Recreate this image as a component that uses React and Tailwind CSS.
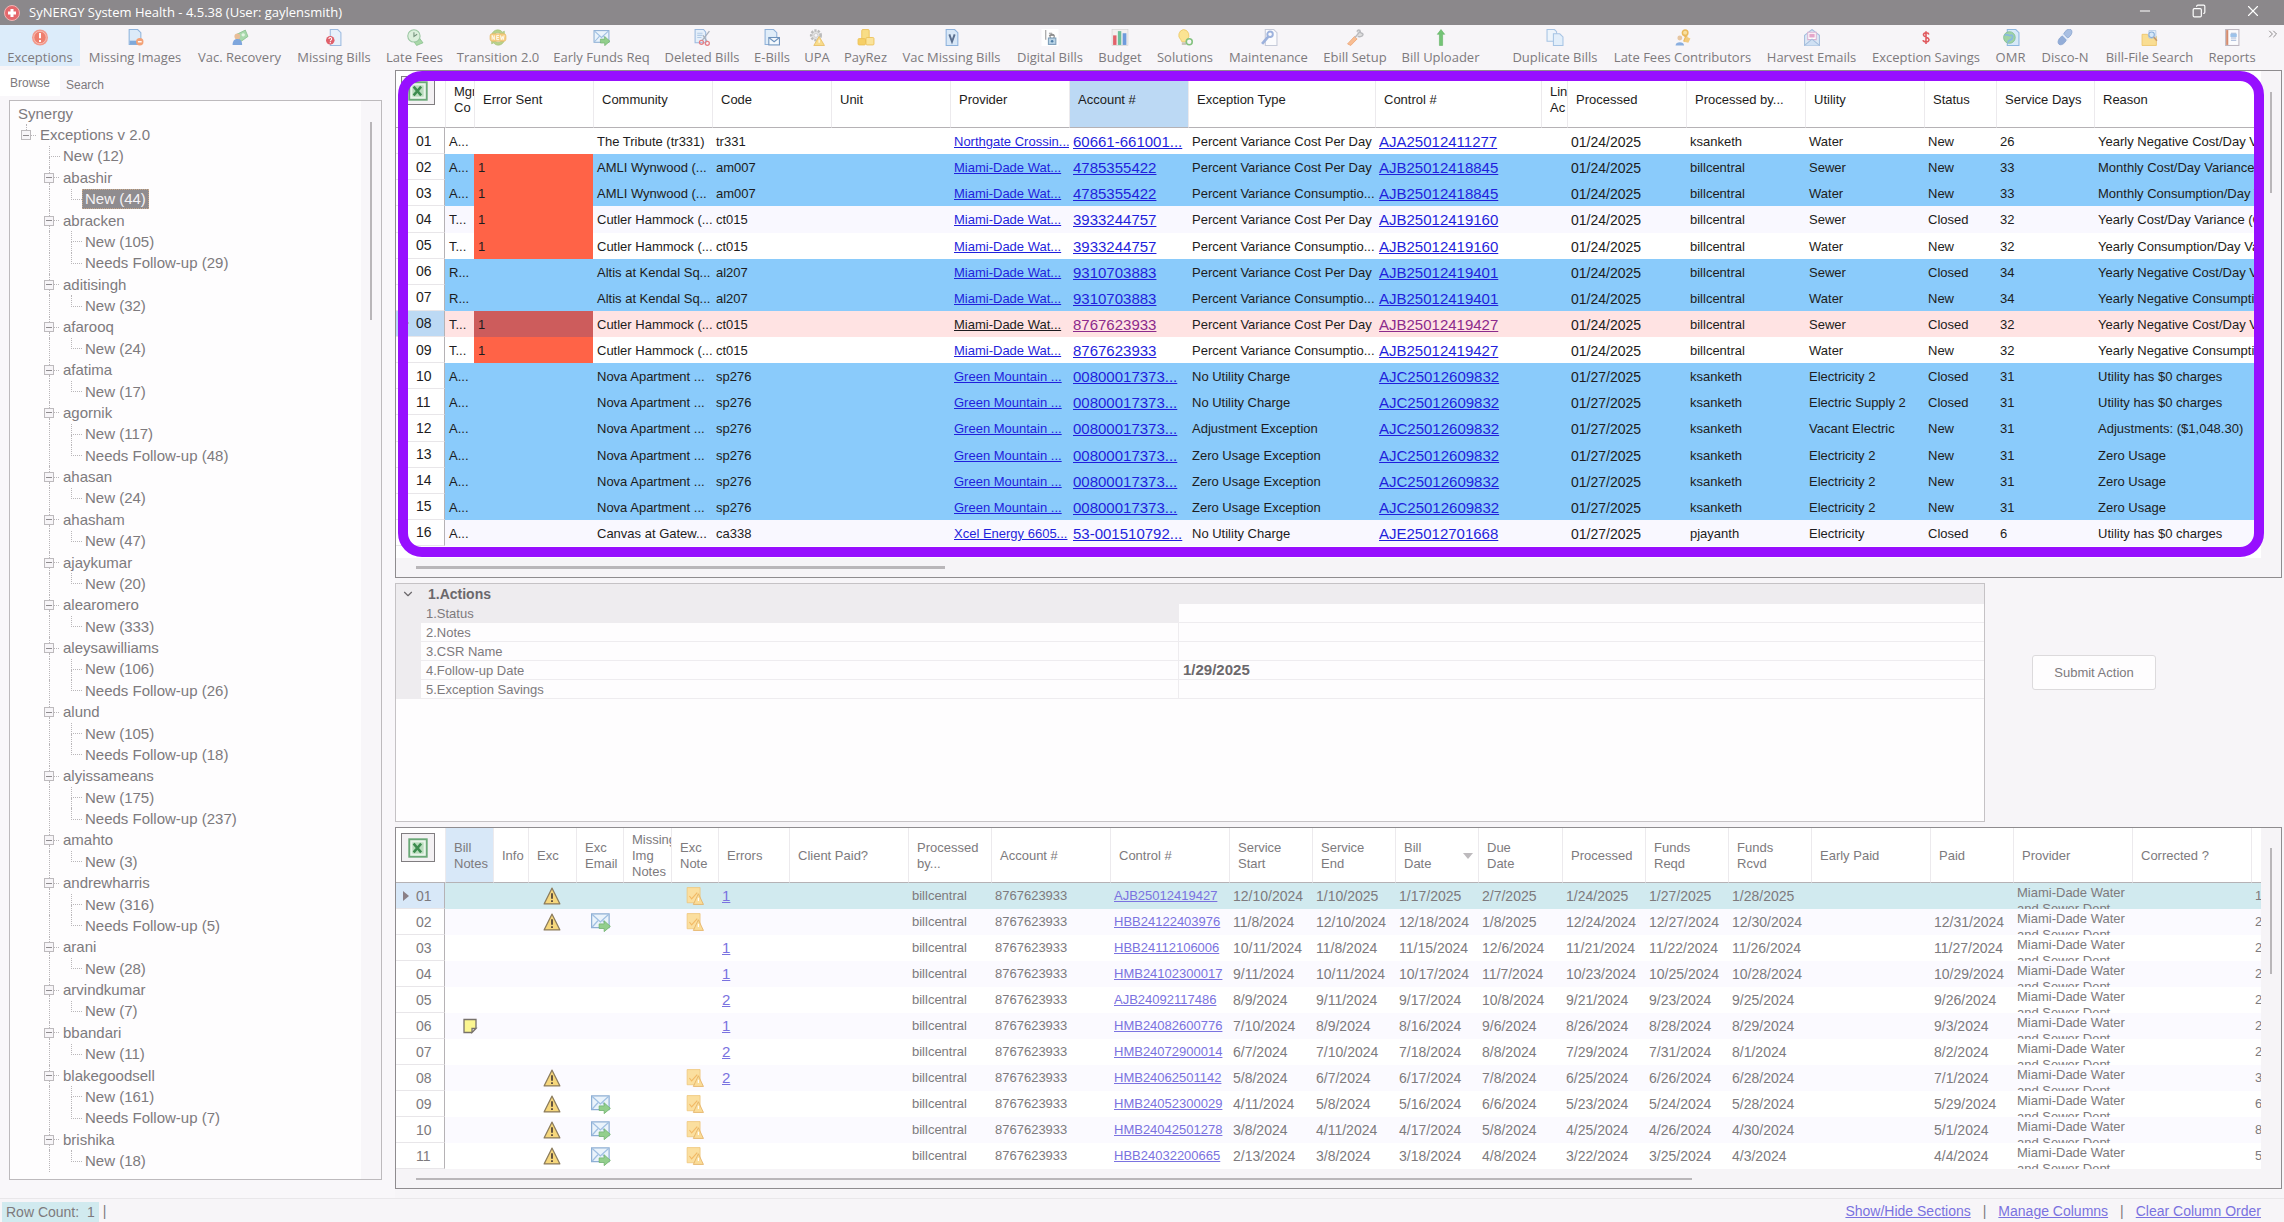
import React from 'react';
import clsx from 'clsx';
import { ChevronDown, ChevronsRight, Minus, X, Copy } from 'lucide-react';

const icons = {
  exceptions: (
    <>
      <circle cx="8" cy="8" r="7.5" fill="#f19a8c" />
      <circle cx="8" cy="8" r="5.8" fill="#ee7f6e" stroke="#fbd5cd" strokeWidth="0.6" />
      <path d="M8 3.8v5M8 10.4v1.8" stroke="#fff" strokeWidth="1.8" />
    </>
  ),
  missingImages: (
    <>
      <path d="M2.5.5h8l3 3v11h-11z" fill="#dcebf8" stroke="#8fb4dc" />
      <path d="M3 11h10v3.5H3z" fill="#7fa9da" />
      <circle cx="12.5" cy="12" r="3.5" fill="#f3a277" />
      <path d="M10.7 12h3.6" stroke="#fff" strokeWidth="1.3" />
    </>
  ),
  vacRecovery: (
    <>
      <path d="M5 5l8-4 2.500 6-7 5z" fill="#a8d8ac" stroke="#84bd8a" strokeWidth="0.7" />
      <circle cx="11" cy="5.5" r="1.6" fill="#e3f4e3" />
      <circle cx="5.5" cy="7" r="2.7" fill="#e8be98" />
      <path d="M1 15c0-4 2-5.500 4.500-5.500S10 11 10 15z" fill="#7ea6dd" />
    </>
  ),
  missingBills: (
    <>
      <path d="M4.5.5h7l3 3v12h-10z" fill="#e8f1fb" stroke="#9dbbe0" />
      <circle cx="4.5" cy="10.5" r="4" fill="#e0606b" />
      <path d="M3.2 9.5c0-2 2.7-1.8 2.6 0 0 1-1.3 1-1.300 2M4.5 12.300v1" stroke="#fff" fill="none" />
    </>
  ),
  lateFees: (
    <>
      <path d="M5 9l6-2 4.500 6-6 2.500z" fill="#a9d8a8" stroke="#83bd88" strokeWidth="0.7" />
      <circle cx="7" cy="6.5" r="5.8" fill="#dcefdc" stroke="#9ac6a2" />
      <path d="M7 3v4l3-2" stroke="#75917d" fill="none" />
    </>
  ),
  transition: (
    <>
      <path d="M2 5C4 0 10-.5 12 3l2-1v5H9l2-2C9 3 6 3 5 5zM14 11c-2 5-8 5.500-10 2l-2 1V9h5l-2 2c2 2 5 2 6 0z" fill="#b9d18a" stroke="#9fbb70" strokeWidth="0.5" />
      <rect x="0.5" y="4.5" width="15" height="7" rx="2" fill="#f6cf83" stroke="#e4b565" strokeWidth="0.6" />
      <path d="M2.500 10V6l2 4V6M9 6H6.800v4H9M6.800 8h2M10.300 6l.8 4 .9-3 .9 3 .8-4" stroke="#fff" strokeWidth="0.8" fill="none" />
    </>
  ),
  mail: (
    <>
      <rect x="0.5" y="1.5" width="14" height="11" fill="#eaf3fb" stroke="#8eafd4" />
      <path d="M1 2l6.500 6L14 2M1 12l4.500-5M14 12L9.500 7" fill="none" stroke="#9fbfe2" />
      <path d="M6.500 9.500h4V7l5 4.500-5 4.200v-2.500h-4z" fill="#93cf8d" stroke="#6fb06c" strokeWidth="0.6" />
    </>
  ),
  deletedBills: (
    <>
      <path d="M1.500.5h8l2 2.500v10h-10z" fill="#e5effa" stroke="#9bb9de" />
      <path d="M3.500 4h5M3.500 6h5M3.500 8h4" stroke="#b3cbe6" />
      <path d="M15 2L8 11M9 6l4 6" stroke="#a9b0bb" strokeWidth="1.2" />
      <circle cx="7.5" cy="12.5" r="1.9" fill="none" stroke="#e57f84" strokeWidth="1.2" />
      <circle cx="13" cy="13.5" r="1.9" fill="none" stroke="#e57f84" strokeWidth="1.2" />
    </>
  ),
  ebills: (
    <>
      <path d="M1.500.5h8l3 3v11h-11z" fill="#e0edf9" stroke="#8fb1d9" />
      <rect x="5" y="8" width="10" height="7" fill="#f5f9fd" stroke="#6f93bd" />
      <path d="M5 8l5 4 5-4" fill="none" stroke="#6f93bd" />
    </>
  ),
  upa: (
    <>
      <circle cx="7" cy="6" r="4.5" fill="#e1e1e1" stroke="#bbb" strokeWidth="2.4" strokeDasharray="2 1.2" />
      <circle cx="7" cy="6" r="1.8" fill="#f7f5f8" stroke="#bbb" strokeWidth="0.5" />
      <path d="M10 7l5 8.500H5z" fill="#f8dc8c" stroke="#e7bd62" strokeWidth="0.8" />
      <path d="M10 10v3" stroke="#fff" />
    </>
  ),
  payrez: (
    <>
      <rect x="4" y="0.5" width="7" height="11" rx="1" fill="#f8dd86" stroke="#ecc155" strokeWidth="0.8" />
      <rect x="0.5" y="9" width="7" height="6" rx="1" fill="#f6cf66" stroke="#ecc155" strokeWidth="0.8" />
      <rect x="8" y="8" width="7.5" height="7" rx="1" fill="#fae39b" stroke="#ecc155" strokeWidth="0.8" />
    </>
  ),
  vacMissing: (
    <>
      <path d="M2.500.5h8l3 3v12h-11z" fill="#d8e7f7" stroke="#8db2dc" />
      <path d="M5.500 5l2.500 7L10.500 5" stroke="#5b6f8f" strokeWidth="1.8" fill="none" />
    </>
  ),
  digitalBills: (
    <>
      <rect width="16" height="16" fill="#fff" />
      <path d="M4 1v9M7 4h3M7 6h5" stroke="#999" />
      <circle cx="10" cy="7" r="2" fill="none" stroke="#888" />
      <rect x="6.5" y="8.5" width="7" height="6" fill="#b9d4e6" stroke="#7d9db8" />
      <circle cx="10" cy="11.5" r="1.2" fill="#4f7ea8" />
    </>
  ),
  budget: (
    <>
      <rect x="0.5" y="0.5" width="15" height="15" fill="#f3efef" stroke="#ccc" strokeWidth="0.5" />
      <rect x="1.5" y="6" width="3.2" height="9" fill="#e2626b" />
      <rect x="6" y="2" width="3.2" height="13" fill="#6cbf9a" />
      <rect x="10.5" y="4" width="3.5" height="11" fill="#6d9bdc" />
    </>
  ),
  solutions: (
    <>
      <path d="M6.500.5a5.500 5.500 0 0 1 3.500 9.500l-1 2H5l-1-2A5.500 5.500 0 0 1 6.500.5z" fill="#fbe392" stroke="#ecc968" strokeWidth="0.8" />
      <path d="M5 12.500h4v2.500H5z" fill="#c9c5b8" />
      <circle cx="12" cy="12" r="2.8" fill="#f7f5f8" stroke="#83c27f" strokeWidth="1.5" />
    </>
  ),
  maintenance: (
    <>
      <path d="M4.500.5h8l3 3v12h-11z" fill="#fbfbfd" stroke="#c5cad8" />
      <path d="M1.500 14l6-7" stroke="#9db2dd" strokeWidth="2.6" />
      <circle cx="9" cy="5" r="2.6" fill="none" stroke="#9db2dd" strokeWidth="1.8" />
    </>
  ),
  ebillSetup: (
    <>
      <path d="M1 14l6.500-7 2.500 2.300L4 15.500z" fill="#f8bd92" stroke="#eba070" strokeWidth="0.7" />
      <path d="M8 8l5-6M10 2.500c0-2 3-2 3 0s3 1 2.500 3-4 2-5 1.500" fill="#ddd" stroke="#b9b9bd" strokeWidth="1.3" />
    </>
  ),
  billUploader: <path d="M8 .5L11.500 5H9.500v10.500h-3V5h-2z" fill="#74c476" stroke="#5aae5d" strokeWidth="0.5" />,
  duplicateBills: (
    <>
      <path d="M.5.5h7l2 2v9h-9z" fill="#edf4fb" stroke="#a7c4e4" />
      <path d="M6.500 4.500h6l3 3v8h-9z" fill="#e2eefa" stroke="#a7c4e4" />
    </>
  ),
  contributors: (
    <>
      <circle cx="10" cy="3.5" r="2.6" fill="#f8e0a0" stroke="#eab95c" strokeWidth="1.4" />
      <path d="M9 6l2 1-2 5" stroke="#eab95c" strokeWidth="2" fill="none" />
      <path d="M11 7l4 2-2 4-4-1z" fill="#f3cb7f" />
      <circle cx="5" cy="8.5" r="2.3" fill="#e7c6a2" />
      <path d="M1 15.500c0-4 8-4 8 0z" fill="#8aafe0" />
    </>
  ),
  harvest: (
    <>
      <path d="M1 6l7-5.500L15 6v9.500H1z" fill="#dce8f6" stroke="#a5bedd" />
      <path d="M4 3h8v7H4z" fill="#fff" stroke="#d9b2d2" />
      <rect x="5.5" y="4.5" width="5" height="3.5" fill="#e4a6ca" />
      <path d="M1 15.500l7-6 7 6" fill="#cfe0f3" stroke="#a5bedd" />
    </>
  ),
  savings: (
    <path d="M10.700 5.200C10.200 3 5.400 3 5.600 5.600c.2 2.300 5 1.700 5.200 4.400.1 2.800-5.200 2.700-5.600.4M8 2v12" fill="none" stroke="#e05a5f" strokeWidth="1.5" />
  ),
  omr: (
    <>
      <path d="M4.500.5h8l3 3v12h-11z" fill="#d7e9f8" stroke="#8db7e0" />
      <circle cx="6.5" cy="8" r="5.5" fill="#9fd3a6" stroke="#7dbb8e" strokeWidth="0.7" />
      <path d="M2 6c3-2 4 1 6 0s2 3 0 4-3 1-3 3" fill="none" stroke="#88b8e0" strokeWidth="1.6" />
    </>
  ),
  disco: (
    <>
      <ellipse cx="10.5" cy="4.5" rx="5" ry="3.2" transform="rotate(-50 10.5 4.5)" fill="#a9bfe2" stroke="#8aa5d0" strokeWidth="0.7" />
      <ellipse cx="5.5" cy="10.5" rx="5" ry="3.2" transform="rotate(-50 5.5 10.5)" fill="#93add8" stroke="#8aa5d0" strokeWidth="0.7" />
      <path d="M5 4.500l6 6" stroke="#e9effa" strokeWidth="1.5" />
    </>
  ),
  fileSearch: (
    <>
      <path d="M.5 5h5l1.500 2h7v8.500H.5z" fill="#f9dd92" stroke="#ecc56a" strokeWidth="0.8" />
      <path d="M7 1.500h6.500v7H7z" fill="#edf4fb" stroke="#a9c3e2" strokeWidth="0.7" />
      <circle cx="9.5" cy="5.5" r="2.6" fill="#d5e7f8" stroke="#8aaed8" />
      <path d="M11.500 7.500l3 3.500" stroke="#c79a6c" strokeWidth="1.5" />
    </>
  ),
  reports: (
    <>
      <rect x="2" y="0.5" width="12.5" height="15" fill="#fbfbfd" stroke="#bdb7c0" />
      <path d="M3.500 1v14" stroke="#d58b6e" strokeWidth="2" />
      <path d="M7 4h5M7 8.500h5M7 10.500h5" stroke="#9fb3d4" />
      <rect x="6.5" y="4.5" width="6" height="3" fill="#9cc2ea" />
    </>
  ),
  excel: (
    <>
      <rect x="1" y="1" width="14" height="14" fill="#e9f4ea" stroke="#6aa877" strokeWidth="1.5" />
      <rect x="3.5" y="3.5" width="9" height="9" fill="#b9dcbd" />
      <path d="M4.500 4.500l6 7M10.500 4.500l-6 7" stroke="#3d8c4f" strokeWidth="2" />
    </>
  ),
  warning: (
    <>
      <path d="M8 1l7 14H1z" fill="#f6d77c" stroke="#8b7b5b" strokeLinejoin="round" />
      <path d="M8 5.500v5M8 11.800v1.600" stroke="#55483b" strokeWidth="1.6" />
    </>
  ),
  excNote: (
    <>
      <path d="M1 .5h11.500V11l-2 3H1z" fill="#fbdf9f" stroke="#eec57c" strokeWidth="0.7" />
      <path d="M3 8l2 2.500L10 5" stroke="#f2b965" fill="none" />
      <path d="M11 6l4.500 9.500h-9z" fill="#fadc98" stroke="#e3ad5f" strokeWidth="0.7" />
      <path d="M11 9.500v3" stroke="#fff" />
    </>
  ),
  sticky: <path d="M2 1.500h12v9l-4 4H2zM14 10.500h-4v4z" fill="#fbf691" stroke="#77726b" strokeWidth="1.3" />,
};

function Icon({ name, className = 'h-[18px] w-[18px]' }) {
  return (
    <svg viewBox="0 0 16 16" className={className} aria-hidden="true">
      {icons[name]}
    </svg>
  );
}

const toolbar = [
  { label: 'Exceptions', icon: 'exceptions', width: 'w-[80px]', active: true },
  { label: 'Missing Images', icon: 'missingImages', width: 'w-[110px]' },
  { label: 'Vac. Recovery', icon: 'vacRecovery', width: 'w-[99px]' },
  { label: 'Missing Bills', icon: 'missingBills', width: 'w-[90px]' },
  { label: 'Late Fees', icon: 'lateFees', width: 'w-[71px]' },
  { label: 'Transition 2.0', icon: 'transition', width: 'w-[96px]' },
  { label: 'Early Funds Req', icon: 'mail', width: 'w-[111px]' },
  { label: 'Deleted Bills', icon: 'deletedBills', width: 'w-[90px]' },
  { label: 'E-Bills', icon: 'ebills', width: 'w-[50px]' },
  { label: 'UPA', icon: 'upa', width: 'w-[40px]' },
  { label: 'PayRez', icon: 'payrez', width: 'w-[57px]' },
  { label: 'Vac Missing Bills', icon: 'vacMissing', width: 'w-[115px]' },
  { label: 'Digital Bills', icon: 'digitalBills', width: 'w-[82px]' },
  { label: 'Budget', icon: 'budget', width: 'w-[58px]' },
  { label: 'Solutions', icon: 'solutions', width: 'w-[72px]' },
  { label: 'Maintenance', icon: 'maintenance', width: 'w-[95px]' },
  { label: 'Ebill Setup', icon: 'ebillSetup', width: 'w-[78px]' },
  { label: 'Bill Uploader', icon: 'billUploader', width: 'w-[93px]' },
  { label: 'Duplicate Bills', icon: 'duplicateBills', width: 'w-[102px] ml-[17px]' },
  { label: 'Late Fees Contributors', icon: 'contributors', width: 'w-[153px]' },
  { label: 'Harvest Emails', icon: 'harvest', width: 'w-[105px]' },
  { label: 'Exception Savings', icon: 'savings', width: 'w-[124px]' },
  { label: 'OMR', icon: 'omr', width: 'w-[45px]' },
  { label: 'Disco-N', icon: 'disco', width: 'w-[64px]' },
  { label: 'Bill-File Search', icon: 'fileSearch', width: 'w-[105px]' },
  { label: 'Reports', icon: 'reports', width: 'w-[60px]' },
];

// name, new count, follow-up count
const users = [
  ['abashir', 44],
  ['abracken', 105, 29],
  ['aditisingh', 32],
  ['afarooq', 24],
  ['afatima', 17],
  ['agornik', 117, 48],
  ['ahasan', 24],
  ['ahasham', 47],
  ['ajaykumar', 20],
  ['alearomero', 333],
  ['aleysawilliams', 106, 26],
  ['alund', 105, 18],
  ['alyissameans', 175, 237],
  ['amahto', 3],
  ['andrewharris', 316, 5],
  ['arani', 28],
  ['arvindkumar', 7],
  ['bbandari', 11],
  ['blakegoodsell', 161, 7],
  ['brishika', 18],
];

const PVC = 'Percent Variance Cost Per Day';
const PVU = 'Percent Variance Consumptio...';

// mgr, errors, community, code, provider, account, type, control, date, by, utility, status, days, reason, color
const exceptionRows = [
  ['A...', '', 'The Tribute (tr331)', 'tr331', 'Northgate Crossin...', '60661-661001...', PVC, 'AJA25012411277', '01/24/2025', 'ksanketh', 'Water', 'New', '26', 'Yearly Negative Cost/Day V', 'white'],
  ['A...', '1', 'AMLI Wynwood (...', 'am007', 'Miami-Dade Wat...', '4785355422', PVC, 'AJB25012418845', '01/24/2025', 'billcentral', 'Sewer', 'New', '33', 'Monthly Cost/Day Variance', 'blue'],
  ['A...', '1', 'AMLI Wynwood (...', 'am007', 'Miami-Dade Wat...', '4785355422', PVU, 'AJB25012418845', '01/24/2025', 'billcentral', 'Water', 'New', '33', 'Monthly Consumption/Day V', 'blue'],
  ['T...', '1', 'Cutler Hammock (...', 'ct015', 'Miami-Dade Wat...', '3933244757', PVC, 'AJB25012419160', '01/24/2025', 'billcentral', 'Sewer', 'Closed', '32', 'Yearly Cost/Day Variance (C', 'alt'],
  ['T...', '1', 'Cutler Hammock (...', 'ct015', 'Miami-Dade Wat...', '3933244757', PVU, 'AJB25012419160', '01/24/2025', 'billcentral', 'Water', 'New', '32', 'Yearly Consumption/Day Va', 'white'],
  ['R...', '', 'Altis at Kendal Sq...', 'al207', 'Miami-Dade Wat...', '9310703883', PVC, 'AJB25012419401', '01/24/2025', 'billcentral', 'Sewer', 'Closed', '34', 'Yearly Negative Cost/Day V', 'blue'],
  ['R...', '', 'Altis at Kendal Sq...', 'al207', 'Miami-Dade Wat...', '9310703883', PVU, 'AJB25012419401', '01/24/2025', 'billcentral', 'Water', 'New', '34', 'Yearly Negative Consumptio', 'blue'],
  ['T...', '1', 'Cutler Hammock (...', 'ct015', 'Miami-Dade Wat...', '8767623933', PVC, 'AJB25012419427', '01/24/2025', 'billcentral', 'Sewer', 'Closed', '32', 'Yearly Negative Cost/Day V', 'selected'],
  ['T...', '1', 'Cutler Hammock (...', 'ct015', 'Miami-Dade Wat...', '8767623933', PVU, 'AJB25012419427', '01/24/2025', 'billcentral', 'Water', 'New', '32', 'Yearly Negative Consumptio', 'white'],
  ['A...', '', 'Nova Apartment ...', 'sp276', 'Green Mountain ...', '00800017373...', 'No Utility Charge', 'AJC25012609832', '01/27/2025', 'ksanketh', 'Electricity 2', 'Closed', '31', 'Utility has $0 charges', 'blue'],
  ['A...', '', 'Nova Apartment ...', 'sp276', 'Green Mountain ...', '00800017373...', 'No Utility Charge', 'AJC25012609832', '01/27/2025', 'ksanketh', 'Electric Supply 2', 'Closed', '31', 'Utility has $0 charges', 'blue'],
  ['A...', '', 'Nova Apartment ...', 'sp276', 'Green Mountain ...', '00800017373...', 'Adjustment Exception', 'AJC25012609832', '01/27/2025', 'ksanketh', 'Vacant Electric', 'New', '31', 'Adjustments: ($1,048.30)', 'blue'],
  ['A...', '', 'Nova Apartment ...', 'sp276', 'Green Mountain ...', '00800017373...', 'Zero Usage Exception', 'AJC25012609832', '01/27/2025', 'ksanketh', 'Electricity 2', 'New', '31', 'Zero Usage', 'blue'],
  ['A...', '', 'Nova Apartment ...', 'sp276', 'Green Mountain ...', '00800017373...', 'Zero Usage Exception', 'AJC25012609832', '01/27/2025', 'ksanketh', 'Electricity 2', 'New', '31', 'Zero Usage', 'blue'],
  ['A...', '', 'Nova Apartment ...', 'sp276', 'Green Mountain ...', '00800017373...', 'Zero Usage Exception', 'AJC25012609832', '01/27/2025', 'ksanketh', 'Electricity 2', 'New', '31', 'Zero Usage', 'blue'],
  ['A...', '', 'Canvas at Gatew...', 'ca338', 'Xcel Energy 6605...', '53-001510792...', 'No Utility Charge', 'AJE25012701668', '01/27/2025', 'pjayanth', 'Electricity', 'Closed', '6', 'Utility has $0 charges', 'alt'],
];

const exceptionCols = [
  { lines: ['Mgr', 'Co'], width: 'w-[29px]' },
  { lines: ['Error Sent'], width: 'w-[119px]' },
  { lines: ['Community'], width: 'w-[119px]' },
  { lines: ['Code'], width: 'w-[119px]' },
  { lines: ['Unit'], width: 'w-[119px]' },
  { lines: ['Provider'], width: 'w-[119px]' },
  { lines: ['Account #'], width: 'w-[119px]', active: true },
  { lines: ['Exception Type'], width: 'w-[187px]' },
  { lines: ['Control #'], width: 'w-[166px]' },
  { lines: ['Lin', 'Ac'], width: 'w-[26px]' },
  { lines: ['Processed'], width: 'w-[119px]' },
  { lines: ['Processed by...'], width: 'w-[119px]' },
  { lines: ['Utility'], width: 'w-[119px]' },
  { lines: ['Status'], width: 'w-[72px]' },
  { lines: ['Service Days'], width: 'w-[98px]' },
  { lines: ['Reason'], width: '' },
];

const rowColors = {
  white: 'bg-white',
  alt: 'bg-[#f9f8ff]',
  blue: 'bg-[#8acbfb]',
  selected: 'bg-[#ffe3e3]',
};

const billCols = [
  { lines: ['Bill', 'Notes'], width: 'w-[48px]', active: true },
  { lines: ['Info'], width: 'w-[35px]' },
  { lines: ['Exc'], width: 'w-[48px]' },
  { lines: ['Exc', 'Email'], width: 'w-[47px]' },
  { lines: ['Missing', 'Img', 'Notes'], width: 'w-[48px]' },
  { lines: ['Exc', 'Note'], width: 'w-[47px]' },
  { lines: ['Errors'], width: 'w-[71px]' },
  { lines: ['Client Paid?'], width: 'w-[119px]' },
  { lines: ['Processed', 'by...'], width: 'w-[83px]' },
  { lines: ['Account #'], width: 'w-[119px]' },
  { lines: ['Control #'], width: 'w-[119px]' },
  { lines: ['Service', 'Start'], width: 'w-[83px]' },
  { lines: ['Service', 'End'], width: 'w-[83px]' },
  { lines: ['Bill', 'Date'], width: 'w-[83px]', sorted: true },
  { lines: ['Due', 'Date'], width: 'w-[84px]' },
  { lines: ['Processed'], width: 'w-[83px]' },
  { lines: ['Funds', 'Reqd'], width: 'w-[83px]' },
  { lines: ['Funds', 'Rcvd'], width: 'w-[83px]' },
  { lines: ['Early Paid'], width: 'w-[119px]' },
  { lines: ['Paid'], width: 'w-[83px]' },
  { lines: ['Provider'], width: 'w-[119px]' },
  { lines: ['Corrected ?'], width: 'w-[119px]' },
  { lines: [''], width: '' },
];

// flags: n = bill note, w = exception, m = exception email
const billRows = [
  ['w', '1', 'AJB25012419427', '12/10/2024', '1/10/2025', '1/17/2025', '2/7/2025', '1/24/2025', '1/27/2025', '1/28/2025', '', '1'],
  ['wm', '', 'HBB24122403976', '11/8/2024', '12/10/2024', '12/18/2024', '1/8/2025', '12/24/2024', '12/27/2024', '12/30/2024', '12/31/2024', '2'],
  ['', '1', 'HBB24112106006', '10/11/2024', '11/8/2024', '11/15/2024', '12/6/2024', '11/21/2024', '11/22/2024', '11/26/2024', '11/27/2024', '2'],
  ['', '1', 'HMB24102300017', '9/11/2024', '10/11/2024', '10/17/2024', '11/7/2024', '10/23/2024', '10/25/2024', '10/28/2024', '10/29/2024', '2'],
  ['', '2', 'AJB24092117486', '8/9/2024', '9/11/2024', '9/17/2024', '10/8/2024', '9/21/2024', '9/23/2024', '9/25/2024', '9/26/2024', '2'],
  ['n', '1', 'HMB24082600776', '7/10/2024', '8/9/2024', '8/16/2024', '9/6/2024', '8/26/2024', '8/28/2024', '8/29/2024', '9/3/2024', '2'],
  ['', '2', 'HMB24072900014', '6/7/2024', '7/10/2024', '7/18/2024', '8/8/2024', '7/29/2024', '7/31/2024', '8/1/2024', '8/2/2024', '2'],
  ['w', '2', 'HMB24062501142', '5/8/2024', '6/7/2024', '6/17/2024', '7/8/2024', '6/25/2024', '6/26/2024', '6/28/2024', '7/1/2024', '3'],
  ['wm', '', 'HMB24052300029', '4/11/2024', '5/8/2024', '5/16/2024', '6/6/2024', '5/23/2024', '5/24/2024', '5/28/2024', '5/29/2024', '6'],
  ['wm', '', 'HMB24042501278', '3/8/2024', '4/11/2024', '4/17/2024', '5/8/2024', '4/25/2024', '4/26/2024', '4/30/2024', '5/1/2024', '8'],
  ['wm', '', 'HBB24032200665', '2/13/2024', '3/8/2024', '3/18/2024', '4/8/2024', '3/22/2024', '3/25/2024', '4/3/2024', '4/4/2024', '5'],
];

function TitleBar() {
  return (
    <header className="flex h-[25px] items-center bg-[#8b888b] pl-1 text-white">
      <svg viewBox="0 0 16 16" className="h-4 w-4" aria-hidden="true">
        <circle cx="8" cy="8" r="7.5" fill="#e4686c" stroke="#f0b5b5" />
        <path d="M8 4v8M4 8h8" stroke="#fff" strokeWidth="3" />
      </svg>
      <h1 className="ml-[9px] font-['Open_Sans',sans-serif] text-[13px] leading-none">
        SyNERGY System Health - 4.5.38 (User: gaylensmith)
      </h1>
      <div className="ml-auto flex h-full items-center pr-1 pb-1">
        <button type="button" aria-label="Minimize" className="flex w-[54px] justify-center">
          <Minus size={16} strokeWidth={1.5} />
        </button>
        <button type="button" aria-label="Restore" className="flex w-[54px] justify-center">
          <Copy size={14} strokeWidth={2} className="-scale-x-100" />
        </button>
        <button type="button" aria-label="Close" className="flex w-[54px] justify-center">
          <X size={18} strokeWidth={1.5} />
        </button>
      </div>
    </header>
  );
}

function Toolbar() {
  return (
    <nav className="flex h-[45px] items-start bg-[#f7f5f8] font-['Open_Sans',sans-serif] text-[13px] text-[#7d7a7d]">
      {toolbar.map((item) => (
        <button
          key={item.label}
          type="button"
          className={clsx(
            'flex h-[41px] shrink-0 flex-col items-center gap-[2px] pt-1 leading-[18px] whitespace-nowrap',
            item.width,
            item.active && 'bg-[#dcecfa]'
          )}
        >
          <Icon name={item.icon} />
          {item.label}
        </button>
      ))}
      <button type="button" aria-label="More" className="mt-[2px] ml-auto pr-1">
        <ChevronsRight size={14} strokeWidth={1.5} />
      </button>
    </nav>
  );
}

function Toggle({ first }) {
  return (
    <span className="flex w-[10px] flex-col items-center self-stretch">
      <span className="w-px flex-1 border-l border-dotted border-[#b9b6b9]" />
      <button
        type="button"
        aria-label="Collapse"
        className="flex h-[10px] w-[10px] items-center justify-center border border-[#bdbabd] bg-[#f7f5f8]"
      >
        <span className="h-px w-[6px] bg-[#8f8c8f]" />
      </button>
      <span className={clsx('w-px flex-1', !first && 'border-l border-dotted border-[#b9b6b9]')} />
    </span>
  );
}

function Elbow({ last }) {
  return (
    <span className="flex w-[11px] flex-col self-stretch">
      <span className="flex-1 border-b border-l border-dotted border-[#b9b6b9]" />
      <span className={clsx('flex-1', !last && 'border-l border-dotted border-[#b9b6b9]')} />
    </span>
  );
}

function Leaf({ text, last, active }) {
  return (
    <li className="flex flex-1 items-center pl-[39px]">
      <span className="w-[22px] self-stretch border-l border-dotted border-[#b9b6b9]" />
      <Elbow last={last} />
      <span
        className={clsx(
          'px-[3px] leading-[20px]',
          active && 'bg-[#8f8c8f] text-[#f5f3f5] outline-1 -outline-offset-1 outline-dotted outline-[#c9a98a]'
        )}
      >
        {text}
      </span>
    </li>
  );
}

function Sidebar() {
  return (
    <aside className="flex w-[395px] shrink-0 flex-col bg-[#f9f7fa] pb-[18px] text-[#7d7a7d]">
      <div className="flex h-[30px] text-[12px]" role="tablist">
        <button type="button" role="tab" aria-selected="true" className="h-[26px] w-[60px] bg-white">
          Browse
        </button>
        <button type="button" role="tab" aria-selected="false" className="h-[30px] px-[6px]">
          Search
        </button>
      </div>
      <div className="mr-[13px] ml-[9px] flex flex-1 border border-[#bdbabd] bg-[#fefdfe]">
        <ul className="flex flex-1 flex-col overflow-hidden pt-[2px] pb-[7px] text-[15px] leading-[20px]">
          <li className="flex flex-1 items-center pl-2">Synergy</li>
          <li className="flex flex-1 items-center pl-[11px]">
            <Toggle first />
            <span className="w-[5px] border-t border-dotted border-[#b9b6b9]" />
            <span className="ml-[4px]">Exceptions v 2.0</span>
          </li>
          <li className="flex flex-1 items-center pl-[39px]">
            <Elbow />
            <span className="ml-[3px]">New (12)</span>
          </li>
          {users.map(([name, fresh, followUp]) => (
            <React.Fragment key={name}>
              <li className="flex flex-1 items-center pl-[34px]">
                <Toggle />
                <span className="w-[5px] border-t border-dotted border-[#b9b6b9]" />
                <span className="ml-[4px]">{name}</span>
              </li>
              <Leaf text={`New (${fresh})`} last={!followUp} active={name === 'abashir'} />
              {followUp && <Leaf text={`Needs Follow-up (${followUp})`} last />}
            </React.Fragment>
          ))}
        </ul>
        <div className="flex w-[20px] justify-center bg-[#f8f6f9] pt-[21px]">
          <div className="h-[198px] w-[2px] bg-[#b9b6b9]" />
        </div>
      </div>
    </aside>
  );
}

function HeaderCell({ col, activeClass }) {
  return (
    <th
      className={clsx(
        'overflow-hidden border-b border-l border-b-[#b5b2b5] border-l-[#eceaed] pt-[2px] pl-2 text-left font-normal',
        col.active && activeClass
      )}
    >
      <div className="flex items-center justify-between pr-[5px]">
        <span className="w-0 whitespace-nowrap">
          {col.lines.map((line) => (
            <span key={line} className="block">
              {line}
            </span>
          ))}
        </span>
        {col.sorted && (
          <svg viewBox="0 0 10 6" className="h-[6px] w-[10px]" aria-hidden="true">
            <path d="M0 0h10L5 6z" fill="#bdbabd" />
          </svg>
        )}
      </div>
    </th>
  );
}

function ExportCell() {
  return (
    <th className="border-b border-b-[#b5b2b5] bg-white pt-[5px] pl-[5px] align-top">
      <button
        type="button"
        aria-label="Export to Excel"
        className="flex h-[29px] w-[34px] items-center justify-center border border-[#807d80] bg-[#f3f1f3]"
      >
        <Icon name="excel" className="h-[20px] w-[20px]" />
      </button>
    </th>
  );
}

function RowNumber({ index, active, activeClass }) {
  return (
    <th
      className={clsx(
        'border-r border-b border-r-[#b5b2b5] border-b-[#e8e6e9] p-0 text-left font-normal',
        active ? activeClass : 'bg-white'
      )}
    >
      <div className="flex items-center">
        <span className="flex w-[20px] justify-center">
          {active && (
            <svg viewBox="0 0 6 10" className="h-[10px] w-[6px]" aria-hidden="true">
              <path d="M0 0l6 5-6 5z" fill="#8a7f86" />
            </svg>
          )}
        </span>
        <span className="text-[14px]">{String(index + 1).padStart(2, '0')}</span>
      </div>
    </th>
  );
}

function ExceptionsGrid() {
  return (
    <section className="relative flex h-[508px] flex-col border border-[#8f8c8f] bg-[#f6f4f7] text-[13px] text-[#1d1c20]">
      <div className="flex h-[487px]">
        <div className="min-w-0 flex-1 overflow-hidden bg-white">
          <table className="h-[475px] w-full table-fixed border-separate border-spacing-0 leading-[16px] whitespace-nowrap">
            <colgroup>
              <col className="w-[49px]" />
              {exceptionCols.map((col) => (
                <col key={col.lines[0]} className={col.width} />
              ))}
            </colgroup>
            <thead>
              <tr className="h-[57px]">
                <ExportCell />
                {exceptionCols.map((col) => (
                  <HeaderCell key={col.lines[0]} col={col} activeClass="bg-[#bcd9f4]" />
                ))}
              </tr>
            </thead>
            <tbody>
              {exceptionRows.map((row, i) => {
                const [mgr, errors, community, code, provider, account, type, control, date, by, utility, status, days, reason, color] = row;
                const selected = color === 'selected';
                const link = selected ? 'text-[#8c2a8c] underline' : 'text-[#1f1fdc] underline';
                return (
                  <tr
                    key={i}
                    className={clsx(
                      'h-[26px] [&>td]:overflow-hidden [&>td]:pt-[2px] [&>td]:pb-0 [&>td]:pl-1',
                      rowColors[color]
                    )}
                  >
                    <RowNumber index={i} active={selected} activeClass="bg-[#bcd9f4]" />
                    <td>{mgr}</td>
                    <td className={clsx(errors && (selected ? 'bg-[#cd5c5c]' : 'bg-[#ff6347]'))}>{errors}</td>
                    <td>{community}</td>
                    <td>{code}</td>
                    <td />
                    <td>
                      <a href="#" className={selected ? 'underline' : 'text-[#1f1fdc] underline'}>{provider}</a>
                    </td>
                    <td className="text-[15px]">
                      <a href="#" className={link}>{account}</a>
                    </td>
                    <td>{type}</td>
                    <td className="text-[15px]">
                      <a href="#" className={link}>{control}</a>
                    </td>
                    <td />
                    <td className="text-[14px]">{date}</td>
                    <td>{by}</td>
                    <td>{utility}</td>
                    <td>{status}</td>
                    <td>{days}</td>
                    <td>{reason}</td>
                  </tr>
                );
              })}
            </tbody>
          </table>
        </div>
        <div className="flex w-[20px] justify-center bg-[#f6f4f7] pt-[21px]">
          <div className="h-[101px] w-[2px] bg-[#b9b6b9]" />
        </div>
      </div>
      <div className="flex flex-1 items-center pl-[20px]">
        <div className="h-[3px] w-[529px] bg-[#b9b6b9]" />
      </div>
      <div className="pointer-events-none absolute top-0 right-[17px] left-[2px] h-[486px] rounded-[24px] border-[10px] border-[#970fff]" />
    </section>
  );
}

const actionFields = [
  ['1.Status', ''],
  ['2.Notes', ''],
  ['3.CSR Name', ''],
  ['4.Follow-up Date', '1/29/2025'],
  ['5.Exception Savings', ''],
];

function ActionsPanel() {
  return (
    <section className="flex flex-1 text-[13px] text-[#7d7a7d]">
      <div className="min-w-0 flex-1 border border-[#c5c2c5] bg-[#fefdfe]">
        <h2 className="flex h-[20px] items-center bg-[#eeecef] text-[14px] font-bold text-[#6b686b]">
          <button type="button" aria-label="Collapse section" className="mr-[13px] ml-[5px]">
            <ChevronDown size={14} strokeWidth={2} />
          </button>
          1.Actions
        </h2>
        {actionFields.map(([label, value], i) => (
          <div key={label} className="flex h-[19px] items-stretch bg-[#eeecef] pl-[25px]">
            <label
              htmlFor={`field-${i}`}
              className={clsx(
                'w-[757px] border-b border-[#eeecef] pl-[5px] leading-[20px]',
                i > 0 && 'bg-[#fefdfe]'
              )}
            >
              {label}
            </label>
            <input
              id={`field-${i}`}
              defaultValue={value}
              className="min-w-0 flex-1 border-b border-l border-[#eeecef] bg-[#fefdfe] pl-1 text-[15px] font-bold text-[#6b686b]"
            />
          </div>
        ))}
      </div>
      <div className="flex w-[297px] items-center pb-[60px] pl-[47px]">
        <button type="button" className="h-[35px] w-[124px] rounded-[3px] border border-[#dcdadc] bg-[#fefdfe]">
          Submit Action
        </button>
      </div>
    </section>
  );
}

function BillsGrid() {
  return (
    <section className="flex flex-col border border-[#8f8c8f] bg-[#f6f4f7] text-[13px] text-[#7d7a7d]">
      <div className="flex">
        <div className="min-w-0 flex-1 overflow-hidden bg-white">
          <table className="w-full table-fixed border-separate border-spacing-0 leading-[16px] whitespace-nowrap">
            <colgroup>
              <col className="w-[49px]" />
              {billCols.map((col, i) => (
                <col key={i} className={col.width} />
              ))}
            </colgroup>
            <thead>
              <tr className="h-[55px]">
                <ExportCell />
                {billCols.map((col, i) => (
                  <HeaderCell key={i} col={col} activeClass="bg-[#d8e8f8]" />
                ))}
              </tr>
            </thead>
            <tbody>
              {billRows.map(([flags, errors, control, ...rest], i) => {
                const [start, end, bill, due, processed, reqd, rcvd, paid, extra] = rest;
                return (
                  <tr
                    key={control}
                    className={clsx(
                      'h-[26px] [&>td]:overflow-hidden [&>td]:py-0 [&>td]:pl-1',
                      i === 0 ? 'bg-[#d1eaef]' : i % 2 ? 'bg-[#fbfaff]' : 'bg-white'
                    )}
                  >
                    <RowNumber index={i} active={i === 0} activeClass="bg-[#d8e8f8]" />
                    <td>{flags.includes('n') && <Icon name="sticky" className="ml-[13px] h-[16px] w-[16px]" />}</td>
                    <td />
                    <td>{flags.includes('w') && <Icon name="warning" className="ml-[11px] h-[18px] w-[18px]" />}</td>
                    <td>{flags.includes('m') && <Icon name="mail" className="ml-[11px] h-[20px] w-[20px]" />}</td>
                    <td />
                    <td>{flags.includes('w') && <Icon name="excNote" className="ml-[11px] h-[18px] w-[18px]" />}</td>
                    <td className="text-[15px]">
                      {errors && <a href="#" className="text-[#7a72e0] underline">{errors}</a>}
                    </td>
                    <td />
                    <td>billcentral</td>
                    <td>8767623933</td>
                    <td>
                      <a href="#" className="text-[#7a72e0] underline">{control}</a>
                    </td>
                    {[start, end, bill, due, processed, reqd, rcvd].map((date, n) => (
                      <td key={n} className="text-[14px]">{date}</td>
                    ))}
                    <td />
                    <td className="text-[14px]">{paid}</td>
                    <td>
                      <div className="h-[26px] overflow-hidden pt-[2px] whitespace-normal">
                        Miami-Dade Water and Sewer Dept.
                      </div>
                    </td>
                    <td />
                    <td>{extra}</td>
                  </tr>
                );
              })}
            </tbody>
          </table>
        </div>
        <div className="flex w-[20px] justify-center bg-[#f6f4f7] pt-[20px]">
          <div className="h-[126px] w-[2px] bg-[#b9b6b9]" />
        </div>
      </div>
      <div className="flex h-[19px] items-center pl-[20px]">
        <div className="h-[2px] w-[1276px] bg-[#b9b6b9]" />
      </div>
    </section>
  );
}

function StatusBar() {
  return (
    <footer className="flex h-[24px] items-center border-t border-[#e9e7ea] pt-[2px] pr-[23px] pl-[2px] text-[14px] text-[#7d7a7d]">
      <span className="bg-[#d1eaef] px-1 leading-[20px] whitespace-pre">Row Count:  1</span>
      <span className="ml-[4px]">|</span>
      <div className="ml-auto flex items-center gap-[12px]">
        <a href="#" className="text-[#7a72e0] underline">Show/Hide Sections</a>
        <span>|</span>
        <a href="#" className="text-[#7a72e0] underline">Manage Columns</a>
        <span>|</span>
        <a href="#" className="text-[#7a72e0] underline">Clear Column Order</a>
      </div>
    </footer>
  );
}

export default function App() {
  return (
    <div className="flex min-h-screen flex-col bg-[#f7f5f8] font-['Liberation_Sans',Arial,sans-serif]">
      <TitleBar />
      <Toolbar />
      <main className="flex flex-1">
        <Sidebar />
        <div className="flex min-w-0 flex-1 flex-col gap-[5px] pr-[2px] pb-[9px]">
          <ExceptionsGrid />
          <ActionsPanel />
          <BillsGrid />
        </div>
      </main>
      <StatusBar />
    </div>
  );
}
